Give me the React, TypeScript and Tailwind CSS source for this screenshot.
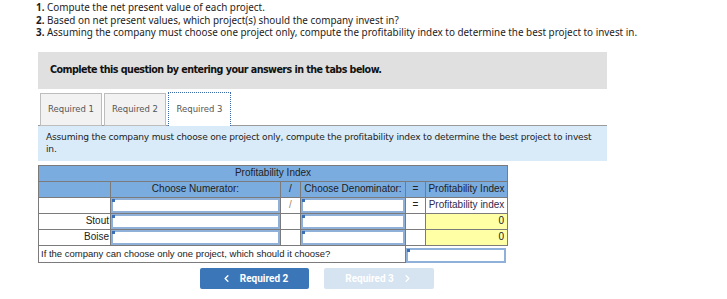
import { ChevronLeft, ChevronRight } from "lucide-react";

const Field = ({ className = "" }: { className?: string }) => (
  <div className={`relative h-[15px] w-full border-2 border-[#8fb0d8] bg-white ${className}`}>
    <span className="absolute -left-px -top-px h-[3px] w-[3px] bg-[#3a6fb5]" />
  </div>
);

export default function App() {
  const td = "border border-[#7b7b7b] h-[16px] p-0 align-middle";
  return (
    <div className="relative h-[299px] w-[727px] overflow-hidden bg-white text-[#222]">
      <div className="pl-[36px] pt-px text-[9.9px] leading-[12.5px] text-[#1c1c1c]" style={{ fontFamily: '"Noto Sans", sans-serif' }}>
        <p><b>1.</b> Compute the net present value of each project.</p>
        <p><b>2.</b> Based on net present values, which project(s) should the company invest in?</p>
        <p><b>3.</b> Assuming the company must choose one project only, compute the profitability index to determine the best project to invest in.</p>
      </div>

      <div className="ml-[38px] mt-[13px] w-[569px]" style={{ fontFamily: '"DejaVu Sans", Tahoma, sans-serif' }}>
        <div className="flex h-[37px] items-center bg-[#e0e0e0] pl-[12px] text-[9.6px] font-bold tracking-[-0.55px] text-[#111]">
          Complete this question by entering your answers in the tabs below.
        </div>

        <div className="mt-[4px] flex h-[33px] items-end gap-[2px] border-b border-[#9a9a9a] pl-[2px]">
          <div className="-mb-px flex h-[33px] w-[62px] items-center justify-center border border-[#bdbdbd] bg-[#f2f2f2] text-[8.5px] text-[#555]">Required 1</div>
          <div className="-mb-px flex h-[33px] w-[62px] items-center justify-center border border-[#bdbdbd] bg-[#f2f2f2] text-[8.5px] text-[#555]">Required 2</div>
          <div className="-mb-px flex h-[34px] w-[63px] items-center justify-center border border-dotted border-b-0 border-[#3b6aa8] bg-white text-[8.5px] text-[#555]">Required 3</div>
        </div>

        <div className="h-[35px] bg-[#d9ebf9] pl-[8px] pt-[5px] text-[9.1px] leading-[12px] tracking-[-0.2px] text-[#222]">
          Assuming the company must choose one project only, compute the profitability index to determine the best project to invest
          <br />in.
        </div>
      </div>

      <table className="ml-[38px] mt-[4px] border-collapse text-[10px] leading-[14px] text-[#222]" style={{ fontFamily: '"Liberation Sans", Arial, sans-serif' }}>
        <colgroup>
          <col className="w-[72px]" />
          <col className="w-[170px]" />
          <col className="w-[20px]" />
          <col className="w-[105px]" />
          <col className="w-[20px]" />
          <col className="w-[82px]" />
        </colgroup>
        <tbody>
          <tr className="bg-[#7aace0]">
            <td colSpan={6} className={`${td} text-center`}>Profitability Index</td>
          </tr>
          <tr className="bg-[#7aace0]">
            <td className={td} />
            <td className={`${td} text-center`}>Choose Numerator:</td>
            <td className={`${td} text-center`}>/</td>
            <td className={`${td} text-center`}>Choose Denominator:</td>
            <td className={`${td} text-center`}>=</td>
            <td className={`${td} text-center`}>Profitability Index</td>
          </tr>
          <tr>
            <td className={td} />
            <td className={td}><Field /></td>
            <td className={`${td} text-center text-[#a08a6a]`}>/</td>
            <td className={td}><Field /></td>
            <td className={`${td} text-center`}>=</td>
            <td className={`${td} text-center text-[#33284f]`}>Profitability index</td>
          </tr>
          <tr>
            <td className={`${td} pr-px text-right`}>Stout</td>
            <td className={td}><Field /></td>
            <td className={td} />
            <td className={td}><Field /></td>
            <td className={td} />
            <td className={`${td} bg-[#ffffa6] pr-[3px] text-right`}>0</td>
          </tr>
          <tr>
            <td className={`${td} pr-px text-right`}>Boise</td>
            <td className={td}><Field /></td>
            <td className={td} />
            <td className={td}><Field /></td>
            <td className={td} />
            <td className={`${td} bg-[#ffffa6] pr-[3px] text-right`}>0</td>
          </tr>
          <tr>
            <td colSpan={4} className={`${td} pl-[2px] text-[9.5px]`}>If the company can choose only one project, which should it choose?</td>
            <td colSpan={2} className="h-[16px] p-0 pr-[2px] pt-[2px] align-top"><Field /></td>
          </tr>
        </tbody>
      </table>

      <div className="ml-[200px] mt-[5px] flex gap-[15px] text-[10px] font-bold" style={{ fontFamily: '"Roboto", sans-serif' }}>
        <div className="flex h-[21px] w-[109px] items-center justify-center gap-[8px] rounded-[2px] bg-[#3b76b8] text-white">
          <ChevronLeft size={11} strokeWidth={3} />
          <span>Required 2</span>
        </div>
        <div className="flex h-[21px] w-[110px] items-center justify-center gap-[8px] rounded-[2px] bg-[#d6e3f1] text-white">
          <span>Required 3</span>
          <ChevronRight size={11} strokeWidth={3} />
        </div>
      </div>
    </div>
  );
}
